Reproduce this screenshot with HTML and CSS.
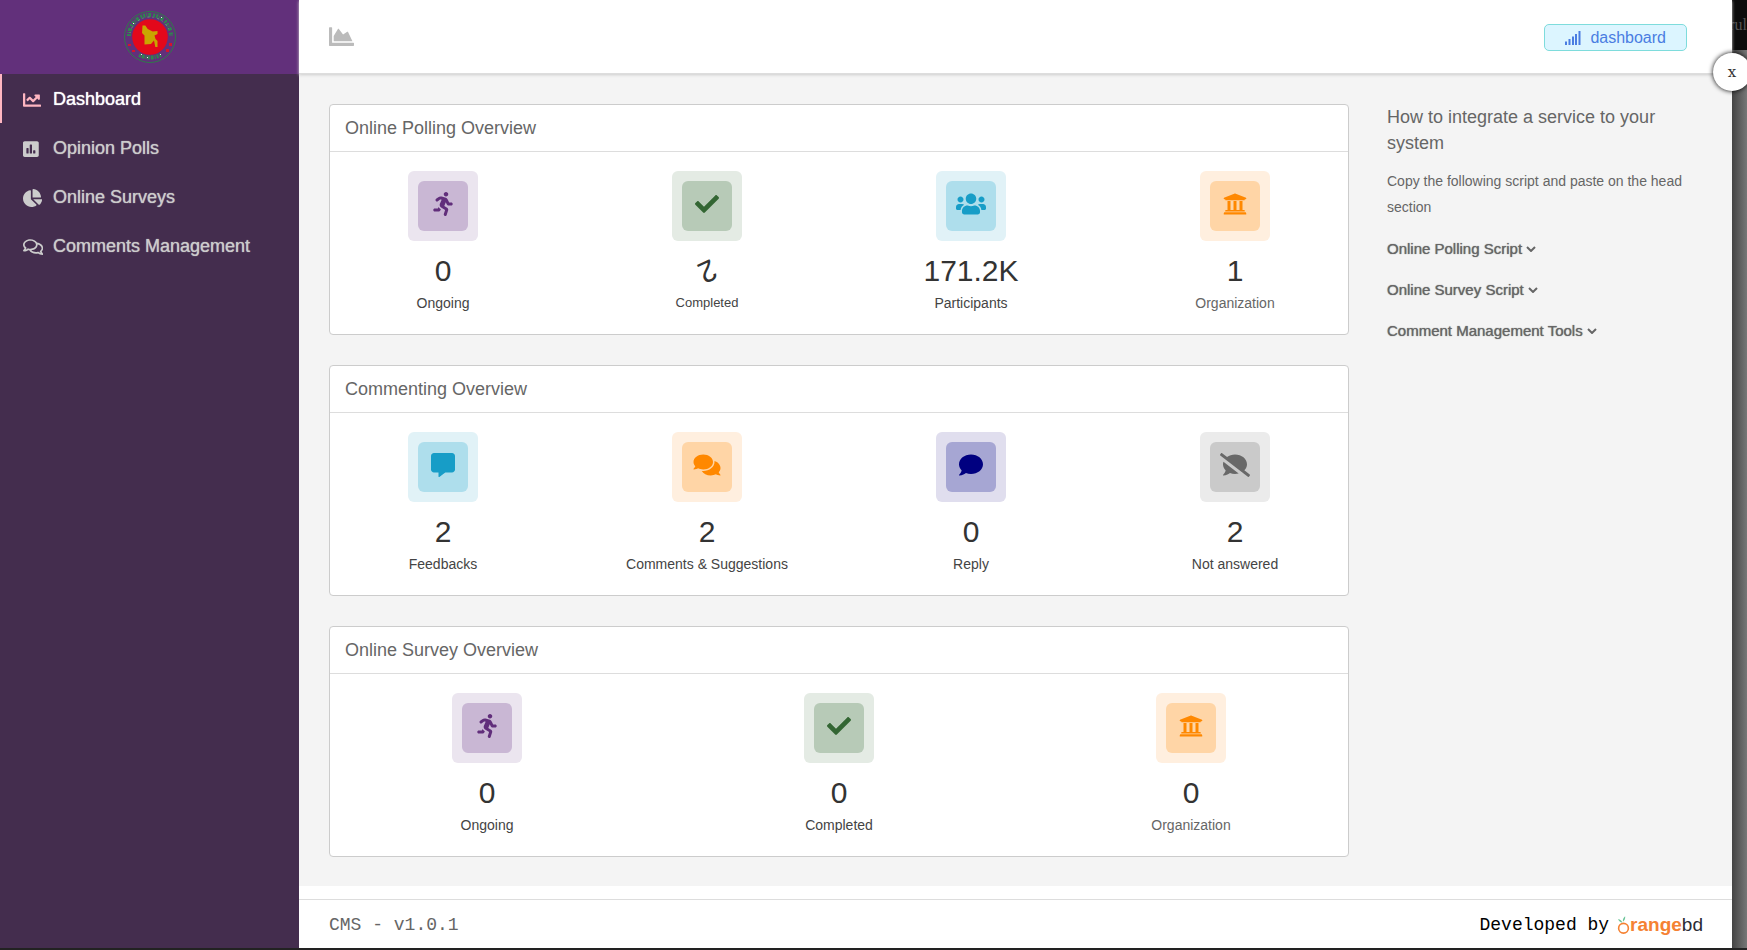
FILE: index.html
```html
<!DOCTYPE html>
<html lang="en">
<head>
<meta charset="utf-8">
<title>CMS Dashboard</title>
<link rel="stylesheet" href="styles.css">
</head>
<body>
<svg class="sprite" aria-hidden="true">
  <symbol id="i-running" viewBox="0 0 416 512"><path d="M272 96c26.51 0 48-21.49 48-48S298.51 0 272 0s-48 21.49-48 48 21.49 48 48 48zM113.69 317.47l-14.8 34.52H32c-17.67 0-32 14.33-32 32s14.33 32 32 32h77.45c19.25 0 36.58-11.44 44.11-29.09l8.79-20.52-10.67-6.3c-17.32-10.23-30.06-25.37-37.99-42.61zM384 223.99h-44.03l-26.06-53.25c-12.5-25.55-35.45-44.23-61.78-50.94l-71.08-21.14c-28.3-6.8-57.77-.55-80.84 17.14l-39.67 30.41c-14.03 10.75-16.69 30.83-5.92 44.86s30.84 16.66 44.86 5.92l39.69-30.41c7.67-5.89 17.44-8 25.27-6.14l14.7 4.37-37.46 87.39c-12.62 29.48-1.31 64.01 26.3 80.31l84.98 50.17-27.47 87.73c-5.28 16.86 4.11 34.82 20.97 40.09 3.19 1 6.41 1.48 9.58 1.48 13.61 0 26.23-8.77 30.52-22.45l31.64-101.06c5.91-20.77-2.89-43.08-21.64-54.39l-61.24-36.14 31.31-78.28 20.27 41.43c8 16.34 24.92 26.89 43.11 26.89H384c17.67 0 32-14.33 32-32s-14.33-31.99-32-31.99z"/></symbol>
  <symbol id="i-check" viewBox="0 0 512 512"><path d="M173.898 439.404l-166.4-166.4c-9.997-9.997-9.997-26.206 0-36.204l36.203-36.204c9.997-9.998 26.207-9.998 36.204 0L192 312.69 432.095 72.596c9.997-9.997 26.207-9.997 36.204 0l36.203 36.204c9.997 9.997 9.997 26.206 0 36.204l-294.4 294.401c-9.998 9.997-26.207 9.997-36.204-.001z"/></symbol>
  <symbol id="i-users" viewBox="0 0 640 512"><path d="M96 224c35.3 0 64-28.7 64-64s-28.7-64-64-64-64 28.7-64 64 28.7 64 64 64zm448 0c35.3 0 64-28.7 64-64s-28.7-64-64-64-64 28.7-64 64 28.7 64 64 64zm32 32h-64c-17.6 0-33.5 7.1-45.1 18.6 40.3 22.1 68.9 62 75.1 109.4h66c17.7 0 32-14.3 32-32v-32c0-35.3-28.7-64-64-64zm-256 0c61.9 0 112-50.1 112-112S381.9 32 320 32 208 82.1 208 144s50.1 112 112 112zm76.8 32h-8.3c-20.8 10-43.9 16-68.5 16s-47.6-6-68.5-16h-8.3C179.6 288 128 339.6 128 403.2V432c0 26.5 21.5 48 48 48h288c26.5 0 48-21.5 48-48v-28.8c0-63.6-51.6-115.2-115.2-115.2zm-223.7-13.4C161.5 263.1 145.6 256 128 256H64c-35.3 0-64 28.7-64 64v32c0 17.7 14.3 32 32 32h65.9c6.3-47.4 34.9-87.3 75.2-109.4z"/></symbol>
  <symbol id="i-university" viewBox="0 0 512 512"><path d="M496 128v16a8 8 0 0 1-8 8h-24v12c0 6.627-5.373 12-12 12H60c-6.627 0-12-5.373-12-12v-12H24a8 8 0 0 1-8-8v-16a8 8 0 0 1 4.941-7.392l232-88a7.996 7.996 0 0 1 6.118 0l232 88A8 8 0 0 1 496 128zm-24 304H40c-13.255 0-24 10.745-24 24v16a8 8 0 0 0 8 8h464a8 8 0 0 0 8-8v-16c0-13.255-10.745-24-24-24zM96 192v192H60c-6.627 0-12 5.373-12 12v20h416v-20c0-6.627-5.373-12-12-12h-36V192h-64v192h-64V192h-64v192h-64V192H96z"/></symbol>
  <symbol id="i-comment-alt" viewBox="0 0 512 512"><path d="M448 0H64C28.7 0 0 28.7 0 64v288c0 35.3 28.7 64 64 64h96v84c0 9.8 11.2 15.5 19.1 9.7L304 416h144c35.3 0 64-28.7 64-64V64c0-35.3-28.7-64-64-64z"/></symbol>
  <symbol id="i-comments" viewBox="0 0 576 512"><path d="M416 192c0-88.4-93.1-160-208-160S0 103.6 0 192c0 34.3 14.1 65.9 38 92-13.4 30.2-35.5 54.2-35.8 54.5-2.2 2.3-2.8 5.7-1.5 8.7S4.8 352 8 352c36.6 0 66.9-12.3 88.7-25 32.2 15.7 70.3 25 111.3 25 114.9 0 208-71.6 208-160zm122 220c23.9-26 38-57.7 38-92 0-66.9-53.5-124.2-129.3-148.1.9 6.6 1.3 13.3 1.3 20.1 0 105.9-107.7 192-240 192-10.8 0-21.3-.8-31.7-1.9C207.8 439.6 281.8 480 368 480c41 0 79.1-9.2 111.3-25 21.8 12.7 52.1 25 88.7 25 3.2 0 6.1-1.9 7.3-4.8 1.3-2.9.7-6.3-1.5-8.7-.3-.3-22.4-24.2-35.8-54.5z"/></symbol>
  <symbol id="i-comment" viewBox="0 0 512 512"><path d="M256 32C114.6 32 0 125.1 0 240c0 49.6 21.4 95 57 130.7C44.5 421.1 2.7 466 2.2 466.5c-2.2 2.3-2.8 5.7-1.5 8.7S4.8 480 8 480c66.3 0 116-31.8 140.6-51.4 32.7 12.3 69 19.4 107.4 19.4 141.4 0 256-93.1 256-208S397.4 32 256 32z"/></symbol>
  <symbol id="i-comment-slash" viewBox="0 0 640 512"><path d="M64 240c0 49.6 21.4 95 57 130.7-12.6 50.3-54.3 95.2-54.8 95.8-2.2 2.3-2.8 5.7-1.5 8.7 1.3 2.9 4.1 4.8 7.3 4.8 66.3 0 116-31.8 140.6-51.4 32.7 12.3 69 19.4 107.4 19.4 27.4 0 53.7-3.6 78.4-10L72.9 186.4c-5.6 17.1-8.9 35-8.9 53.6zm569.8 218.1l-114.4-88.4C554.6 334.1 576 289.2 576 240c0-114.9-114.6-208-256-208-65.1 0-124.2 20.1-169.4 52.7L45.5 3.4C38.5-2 28.5-.8 23 6.2L3.4 31.4c-5.4 7-4.2 17 2.8 22.4l588.4 454.7c7 5.5 17 4.2 22.5-2.8l19.6-25.3c5.4-6.8 4.1-16.9-2.9-22.3z"/></symbol>
  <symbol id="i-chevron" viewBox="0 0 10 6"><path d="M1 1l4 4 4-4" fill="none" stroke="currentColor" stroke-width="2"/></symbol>
</svg>

<div class="app">
  <aside class="sidebar">
    <a class="brand" href="#" aria-label="Home">
      <svg class="emblem" viewBox="0 0 52 52" aria-hidden="true">
        <circle cx="26" cy="26" r="25.500" fill="none" stroke="#2f7a4a" stroke-width="1"/>
        <path d="M5 25A21 21 0 0 1 47 25" fill="none" stroke="#2f8550" stroke-width="4" stroke-dasharray="2 1 1 1 3 2 2 1"/>
        <path d="M6 22A20.500 20.500 0 0 1 46 22" fill="none" stroke="#6f9a86" stroke-width="1" stroke-dasharray="1 4 2 3"/>
        <path d="M15 44q11 5 22 0" fill="none" stroke="#2f8550" stroke-width="4" stroke-dasharray="2 1 3 1 1 1"/>
        <circle cx="26" cy="26" r="17.800" fill="#e3081b"/>
        <path d="M18.500 14.500h2.800l2.400 3.500 5 2.500 4.800-.5v3l-3 1.500 1 3.500 2 2v6h-2.200L30 29.500 27 33l-6.500.5v-9L18 22z" fill="#c9a500"/>
        <path d="M4 33h3v2H4zM8 39h3v2H8zM42 38h3v3h-3zM45 32h3v3h-3z" fill="#d3142c"/>
        <path d="M9 12h1v1H9zM37 6h1v1h-1zM17 43h1v1h-1zM23 46h1v1h-1zM36 43h1v1h-1z" fill="#e8f4e8"/>
      </svg>
    </a>
    <nav class="menu">
      <a class="menu-link active" href="#"><span class="menu-icon"><svg viewBox="0 0 512 512" aria-hidden="true"><path d="M496 384H64V80c0-8.84-7.16-16-16-16H16C7.16 64 0 71.16 0 80v336c0 17.67 14.33 32 32 32h464c8.84 0 16-7.16 16-16v-32c0-8.84-7.16-16-16-16zM464 96H345.94c-21.38 0-32.09 25.85-16.97 40.97l32.4 32.4L288 242.75l-73.37-73.37c-12.5-12.5-32.76-12.5-45.25 0l-68.69 68.69c-6.25 6.25-6.25 16.38 0 22.63l22.62 22.62c6.25 6.25 16.38 6.25 22.63 0L192 237.25l73.37 73.37c12.5 12.5 32.76 12.5 45.25 0l96-96 32.4 32.4c15.12 15.12 40.97 4.41 40.97-16.97V112c.01-8.84-7.15-16-15.99-16z"/></svg></span>Dashboard</a>
      <a class="menu-link" href="#"><span class="menu-icon"><svg viewBox="0 0 448 512" aria-hidden="true"><path d="M400 32H48C21.5 32 0 53.5 0 80v352c0 26.5 21.5 48 48 48h352c26.5 0 48-21.5 48-48V80c0-26.5-21.5-48-48-48zM160 368c0 8.84-7.16 16-16 16h-32c-8.84 0-16-7.16-16-16V240c0-8.84 7.16-16 16-16h32c8.84 0 16 7.16 16 16v128zm96 0c0 8.84-7.16 16-16 16h-32c-8.84 0-16-7.16-16-16V144c0-8.84 7.16-16 16-16h32c8.84 0 16 7.16 16 16v224zm96 0c0 8.84-7.16 16-16 16h-32c-8.84 0-16-7.16-16-16v-64c0-8.84 7.16-16 16-16h32c8.84 0 16 7.16 16 16v64z"/></svg></span>Opinion Polls</a>
      <a class="menu-link" href="#"><span class="menu-icon"><svg viewBox="0 0 544 512" aria-hidden="true"><path d="M527.79 288H290.5l158.03 158.03c6.04 6.04 15.98 6.53 22.19.68 38.7-36.46 65.32-85.61 73.13-140.86 1.34-9.46-6.51-17.85-16.06-17.85zm-15.83-64.8C503.72 103.74 408.26 8.28 288.8.04 279.68-.59 272 7.1 272 16.24V240h223.77c9.14 0 16.82-7.68 16.19-16.8zM224 288V50.71c0-9.55-8.39-17.4-17.84-16.06C86.99 51.49-4.1 155.6.14 280.37 4.5 408.51 114.83 513.59 243.03 511.98c50.4-.63 96.97-16.87 135.26-44.03 7.9-5.6 8.42-17.23 1.57-24.08L224 288z"/></svg></span>Online Surveys</a>
      <a class="menu-link" href="#"><span class="menu-icon"><svg viewBox="0 0 576 512" aria-hidden="true"><path d="M532 386.2c27.5-27.1 44-61.1 44-98.2 0-80-76.5-146.1-176.2-157.9C368.3 72.5 294.3 32 208 32 93.1 32 0 103.6 0 192c0 37 16.5 71 44 98.2-15.3 30.7-37.3 54.5-37.7 54.9-6.3 6.7-8.1 16.5-4.4 25 3.6 8.5 12 14 21.2 14 53.5 0 96.7-20.2 125.2-38.8 9.2 2.1 18.7 3.7 28.4 4.9C208.1 407.6 281.8 448 368 448c20.8 0 40.8-2.4 59.8-6.8C456.3 459.7 499.4 480 553 480c9.2 0 17.5-5.5 21.2-14 3.6-8.5 1.9-18.3-4.4-25-.4-.3-22.5-24.1-37.8-54.8zm-392.8-92.3L122.1 305c-14.1 9.1-28.5 16.3-43.1 21.4 2.7-4.7 5.4-9.7 8-14.8l15.5-31.1L77.7 256C64.2 242.6 48 220.7 48 192c0-60.7 73.3-112 160-112s160 51.3 160 112-73.3 112-160 112c-16.5 0-33-1.9-49-5.6l-19.8-4.5zM498.3 352l-24.7 24.4 15.5 31.1c2.6 5.1 5.3 10.1 8 14.8-14.6-5.1-29-12.3-43.1-21.4l-17.1-11.1-19.9 4.6c-16 3.7-32.5 5.6-49 5.6-54 0-102.2-20.1-131.3-49.7C338 339.5 416 272.9 416 192c0-3.4-.4-6.7-.7-10C479.7 196.5 528 238.8 528 288c0 28.7-16.2 50.6-29.7 64z"/></svg></span>Comments Management</a>
    </nav>
  </aside>

  <div class="page">
    <header class="topbar">
      <svg class="area-icon" viewBox="0 0 512 512" aria-hidden="true"><path d="M500 384c6.6 0 12 5.4 12 12v40c0 6.6-5.4 12-12 12H12c-6.6 0-12-5.4-12-12V76c0-6.6 5.4-12 12-12h40c6.6 0 12 5.4 12 12v308h436zM372.7 159.5L288 216l-85.3-113.7c-5.1-6.8-15.5-6.3-19.9 1L96 248v104h384l-89.9-187.8c-3.2-6.5-11.400-8.700-17.400-4.700z"/></svg>
      <a class="badge" href="#"><svg class="signal" viewBox="0 0 16 14" aria-hidden="true"><path d="M0 10.500h2V14H0zM3.500 8h2v6h-2zM7 5.500h2V14H7zM10 3h2v11h-2zM13.500 0h2v14h-2z"/></svg>dashboard</a>
    </header>

    <main class="content">
      <div class="cards">
        <section class="card">
          <h2 class="card-title">Online Polling Overview</h2>
          <div class="stats">
            <div class="stat"><div class="tile purple"><svg><use href="#i-running"/></svg></div><div class="value">0</div><div class="label">Ongoing</div></div>
            <div class="stat spinning"><div class="tile green"><svg><use href="#i-check"/></svg></div><div class="value">2</div><div class="label">Completed</div></div>
            <div class="stat"><div class="tile blue"><svg><use href="#i-users"/></svg></div><div class="value">171.2K</div><div class="label">Participants</div></div>
            <div class="stat"><div class="tile orange"><svg><use href="#i-university"/></svg></div><div class="value">1</div><div class="label soft">Organization</div></div>
          </div>
        </section>
        <section class="card">
          <h2 class="card-title">Commenting Overview</h2>
          <div class="stats">
            <div class="stat"><div class="tile blue"><svg><use href="#i-comment-alt"/></svg></div><div class="value">2</div><div class="label">Feedbacks</div></div>
            <div class="stat"><div class="tile orange"><svg><use href="#i-comments"/></svg></div><div class="value">2</div><div class="label">Comments &amp; Suggestions</div></div>
            <div class="stat"><div class="tile navy"><svg><use href="#i-comment"/></svg></div><div class="value">0</div><div class="label">Reply</div></div>
            <div class="stat"><div class="tile grey"><svg><use href="#i-comment-slash"/></svg></div><div class="value">2</div><div class="label">Not answered</div></div>
          </div>
        </section>
        <section class="card">
          <h2 class="card-title">Online Survey Overview</h2>
          <div class="stats">
            <div class="stat"><div class="tile purple"><svg><use href="#i-running"/></svg></div><div class="value">0</div><div class="label">Ongoing</div></div>
            <div class="stat"><div class="tile green"><svg><use href="#i-check"/></svg></div><div class="value">0</div><div class="label">Completed</div></div>
            <div class="stat"><div class="tile orange"><svg><use href="#i-university"/></svg></div><div class="value">0</div><div class="label soft">Organization</div></div>
          </div>
        </section>
      </div>

      <aside class="help">
        <h2 class="help-title">How to integrate a service to your system</h2>
        <p class="help-text">Copy the following script and paste on the head section</p>
        <button class="toggle" type="button">Online Polling Script<svg><use href="#i-chevron"/></svg></button>
        <button class="toggle" type="button">Online Survey Script<svg><use href="#i-chevron"/></svg></button>
        <button class="toggle" type="button">Comment Management Tools<svg><use href="#i-chevron"/></svg></button>
      </aside>
    </main>

    <footer class="footer">
      <span class="version">CMS - v1.0.1</span>
      <span class="credit">Developed by
        <a class="maker" href="#" aria-label="orangebd"><svg viewBox="0 0 12 17" aria-hidden="true"><circle cx="6" cy="11" r="4.500" fill="none" stroke="#f58233" stroke-width="1.500"/><path d="M5 6Q4 3 1 2.500Q2 5.500 5 6zM5.500 5Q5 2 7.500 0Q8 3 5.500 5z" fill="#6cc59a"/></svg><b>range</b><span>bd</span></a>
      </span>
    </footer>
    <button class="close" type="button" aria-label="Close">x</button>
  </div>

  <div class="backdrop"><div class="backdrop-bar">rul</div></div>
</div>
</body>
</html>
```

FILE: styles.css
```css
* {
  box-sizing: border-box;
}

body {
  margin: 0;
  overflow-x: hidden;
  background: #222;
  color: #333;
  font-family: "Liberation Sans", Arial, sans-serif;
  font-size: 14px;
}

a {
  color: inherit;
  text-decoration: none;
}

svg {
  fill: currentColor;
}

.sprite {
  display: none;
}

.app {
  display: flex;
  min-height: calc(100vh - 2px);
}

/* Sidebar */
.sidebar {
  flex: 0 0 299px;
  background: #442d4e;
}

.brand {
  display: flex;
  align-items: center;
  justify-content: center;
  height: 74px;
  background: #62307b;
}

.emblem {
  width: 52px;
  height: 52px;
}

.menu {
  display: flex;
  flex-direction: column;
}

.menu-link {
  display: flex;
  align-items: center;
  height: 49px;
  padding: 2px 20px 0 21px;
  border-left: 2px solid transparent;
  color: #ccc;
  font-size: 18px;
  text-shadow: 0 0 1px #ccc;
}

.menu-link.active {
  border-left-color: #ffb6c1;
  color: #fff;
  text-shadow: 0 0 1px #fff;
}

.menu-link.active .menu-icon {
  color: #ffb6c1;
}

.menu-icon {
  display: flex;
  width: 30px;
}

.menu-icon svg {
  height: 18px;
}

/* Main column */
.page {
  position: relative;
  z-index: 1;
  display: flex;
  flex: 1;
  flex-direction: column;
  min-width: 0;
  background: #fff;
}

.topbar {
  z-index: 1;
  display: flex;
  align-items: center;
  justify-content: space-between;
  height: 74px;
  padding: 0 45px 0 30px;
  border-bottom: 1px solid #ddd;
  background: #fff;
  box-shadow: 0 1px 3px #ccc;
}

.area-icon {
  height: 25px;
  color: #bbb;
}

.badge {
  display: flex;
  align-items: center;
  gap: 9px;
  height: 27px;
  margin-top: 2px;
  padding: 0 20px;
  border: 1px solid #7edcdc;
  border-radius: 5px;
  background: #dcf5ff;
  color: #4a7de2;
  font-size: 16px;
}

.signal {
  width: 16px;
  height: 14px;
}

.content {
  display: grid;
  flex: 1;
  grid-template-columns: minmax(0, 1fr) 315px;
  gap: 38px;
  padding: 30px 30px 29px;
  background: #f4f4f4;
}

.cards {
  display: flex;
  flex-direction: column;
  gap: 30px;
}

.card {
  overflow: hidden;
  border: 1px solid #ccc;
  border-radius: 4px;
  background: #fff;
}

.card-title {
  margin: 0;
  padding: 0 15px;
  border-bottom: 1px solid #ddd;
  color: #666;
  font-size: 18px;
  font-weight: 400;
  line-height: 46px;
}

.stats {
  display: grid;
  grid-auto-columns: minmax(0, 1fr);
  grid-auto-flow: column;
  margin: 0 -19px;
  padding: 19px 0;
}

.stat {
  display: flex;
  flex-direction: column;
  align-items: center;
}

.tile {
  display: flex;
  margin-bottom: 10px;
  padding: 10px;
  border-radius: 6px;
  background: var(--outer);
}

.tile svg {
  width: 50px;
  height: 50px;
  padding: 11px 10px 15px;
  border-radius: 6px;
  background: var(--inner);
}

.purple {
  --outer: #ebe5ef;
  --inner: #c9b7d4;
  color: #612e7b;
}

.green {
  --outer: #e4ebe4;
  --inner: #b7cab7;
  color: #336633;
}

.blue {
  --outer: #e1f2f7;
  --inner: #aedeec;
  color: #179dc7;
}

.orange {
  --outer: #ffefdf;
  --inner: #ffd5a6;
  color: #ff8800;
}

.navy {
  --outer: #e0deee;
  --inner: #a6a6d3;
  color: #000080;
}

.grey {
  --outer: #ebebeb;
  --inner: #cacaca;
  color: #686868;
}

.value {
  font-size: 30px;
  line-height: 40px;
}

.label {
  color: #444;
  line-height: 24px;
}

.label.soft {
  color: #666;
}

.spinning .value {
  transform: rotate(155deg);
}

.spinning .label {
  font-size: 13px;
}

/* Help column */
.help {
  display: flex;
  flex-direction: column;
  align-items: flex-start;
  color: #666;
}

.help-title {
  margin: 0;
  font-size: 18px;
  font-weight: 400;
  line-height: 26px;
}

.help-text {
  margin: 12px 0 8px;
  line-height: 26px;
}

.toggle {
  display: flex;
  align-items: center;
  gap: 4px;
  height: 41px;
  padding: 0;
  border: 0;
  background: none;
  color: #666;
  font-family: inherit;
  font-size: 15px;
  text-shadow: 0 0 1px #666;
}

.toggle svg {
  width: 10px;
  height: 6px;
}

/* Footer */
.footer {
  display: flex;
  align-items: center;
  justify-content: space-between;
  height: 49px;
  margin-top: 13px;
  padding: 2px 29px 0 30px;
  border-top: 1px solid #ddd;
  font-family: "Liberation Mono", "Courier New", monospace;
  font-size: 18px;
}

.version {
  color: #666;
}

.credit {
  display: flex;
  gap: 8px;
  align-items: center;
  color: #000;
}

.maker {
  display: flex;
  align-items: center;
  font-family: "Liberation Sans", Arial, sans-serif;
  font-size: 19px;
  color: #2b2b33;
}

.maker b {
  color: #f58233;
}

.maker svg {
  width: 13px;
  height: 19px;
}

/* Strip of the page behind the panel */
.backdrop {
  flex: 0 0 15px;
  overflow: hidden;
  background: linear-gradient(to right, #444, #777);
}

.backdrop-bar {
  display: flex;
  justify-content: flex-end;
  height: 50px;
  background: #0c0c0c;
  color: #555;
  font-family: "Liberation Serif", serif;
  font-size: 16px;
  line-height: 50px;
}

.close {
  position: absolute;
  top: 53px;
  right: -19px;
  z-index: 2;
  width: 38px;
  height: 38px;
  padding: 0;
  border: 0;
  border-radius: 50%;
  background: #fff;
  box-shadow: 0 0 5px #000;
  color: #333;
  font-family: "DejaVu Serif", serif;
  font-size: 15px;
}
```
